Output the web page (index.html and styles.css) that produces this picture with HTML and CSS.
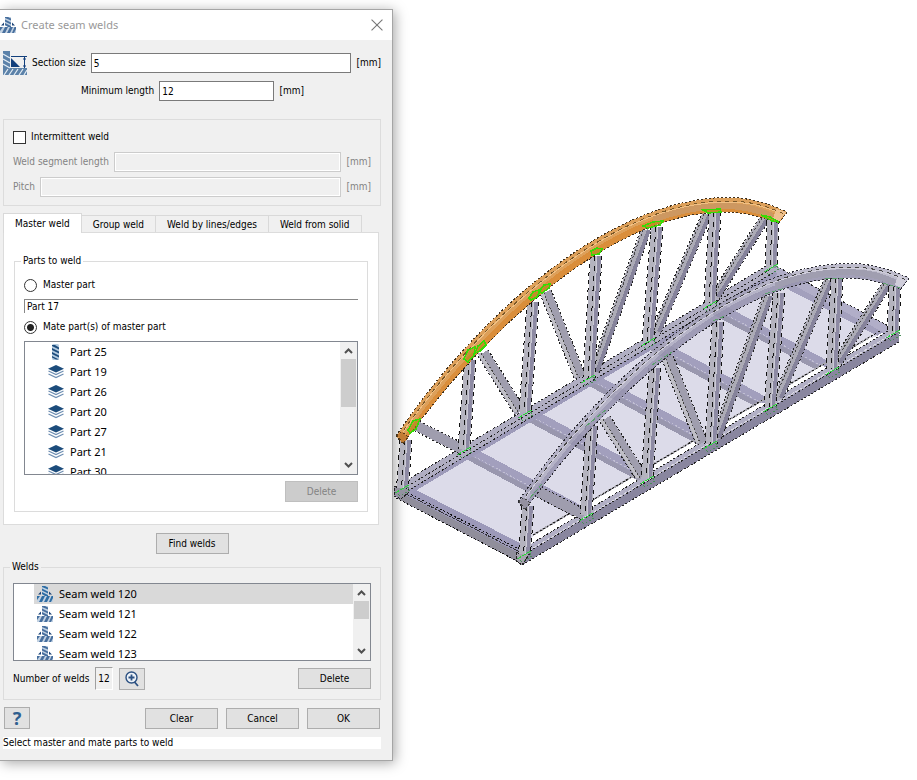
FILE: index.html
```
<!DOCTYPE html>
<html lang="en">
<head>
<meta charset="utf-8">
<title>Create seam welds</title>
<link rel="stylesheet" href="styles.css">
</head>
<body>
<svg class="defs" aria-hidden="true">
  <defs>
    <symbol id="weld" viewBox="0 0 16 16">
      <path d="M5 0h6v9H5zM1 10h14l1 1v5H0v-5z" fill="#c3d2e2"/>
      <path d="M5 0h3l3 1.500v2L5 1zM5 2.500l6 3v2L5 4.500zM5 6l6 3v1H8L5 8zM0 10h3l-3 4zM5 10h3l-3 6H2zM10 10h3l-3 6H7zM14.500 10H16v2l-2 4h-2z" fill="currentColor"/>
      <path d="M1 8.500 4 5.500v3zM15 8.500 12 5.500v3z" fill="#1b4377"/>
    </symbol>
    <symbol id="layers" viewBox="0 0 16 16">
      <path d="M.5 7 8 10.500 15.500 7M.5 10 8 13.500 15.500 10" fill="none" stroke="#6f8fb3" stroke-width="1.300"/>
      <path d="M8 1 16 4.700 8 8.500 0 4.700z" fill="#1c4c7c"/>
    </symbol>
    <symbol id="beam" viewBox="0 0 16 16">
      <path d="M4 1 5 0h5l1 1v14l-1 1H5l-1-1z" fill="#b4cbe0"/>
      <path d="M4 1h3l4 2.500v2L4 2zM4 4l7 3.500v2L4 6zM4 8l7 3.500v2L4 10zM4 12l7 3.500H8l-4-2z" fill="#1c4c7c"/>
    </symbol>
    <symbol id="up" viewBox="0 0 9 6"><path d="M1 5 4.500 1.500 8 5" fill="none" stroke="#505050" stroke-width="2"/></symbol>
    <symbol id="down" viewBox="0 0 9 6"><path d="M1 1 4.500 4.500 8 1" fill="none" stroke="#505050" stroke-width="2"/></symbol>
  </defs>
</svg>
<main class="workspace">
  <form class="dialog">
    <header class="titlebar">
      <svg class="icon title-icon"><use href="#weld"/></svg>
      <h1>Create seam welds</h1>
      <button type="button" class="close" aria-label="Close"><svg viewBox="0 0 11 11"><path d="M.5.5l10 10M10.500.5l-10 10" stroke="#777" fill="none"/></svg></button>
    </header>
    <div class="content">
      <div class="row section-row">
        <svg class="section-icon" viewBox="0 0 24 24">
          <path d="M0 0h7v17h17v7H0z" fill="#5c82a9"/>
          <path d="M0 3l7 4M0 8l7 4M0 13l7 4M1 24l4-6M6 24l4-6M11 24l4-6M16 24l4-6M21 24l3-5" stroke="#e4edf5" stroke-width="1.200"/>
          <path d="M8 7v9h9z" fill="#123f7c"/>
          <path d="M8 5.500h16M21.500 6v11M20 8h3M20 15h3" stroke="#123f7c"/>
        </svg>
        <label for="size">Section size</label>
        <input id="size" type="text" value="5">
        <span class="unit">[mm]</span>
      </div>
      <div class="row length-row">
        <label for="minlen">Minimum length</label>
        <input id="minlen" type="text" value="12">
        <span class="unit">[mm]</span>
      </div>
      <div class="group">
        <div class="row"><input id="inter" type="checkbox"><label for="inter">Intermittent weld</label></div>
        <div class="row off"><label for="seg">Weld segment length</label><input id="seg" type="text" disabled><span class="unit">[mm]</span></div>
        <div class="row off"><label for="pitch">Pitch</label><input id="pitch" type="text" disabled><span class="unit">[mm]</span></div>
      </div>
      <div class="tabs" role="tablist">
        <button type="button" role="tab" class="tab active" aria-selected="true">Master weld</button>
        <button type="button" role="tab" class="tab">Group weld</button>
        <button type="button" role="tab" class="tab">Weld by lines/edges</button>
        <button type="button" role="tab" class="tab">Weld from solid</button>
      </div>
      <section class="panel" role="tabpanel">
        <fieldset>
          <legend>Parts to weld</legend>
          <div class="stack">
            <div class="choice"><input id="master" name="target" type="radio"><label for="master">Master part</label></div>
            <output class="part-name">Part 17</output>
            <div class="choice"><input id="mate" name="target" type="radio" checked><label for="mate">Mate part(s) of master part</label></div>
            <div class="listbox parts">
              <ul>
                <li><svg class="icon"><use href="#beam"/></svg>Part 25</li>
                <li><svg class="icon"><use href="#layers"/></svg>Part 19</li>
                <li><svg class="icon"><use href="#layers"/></svg>Part 26</li>
                <li><svg class="icon"><use href="#layers"/></svg>Part 20</li>
                <li><svg class="icon"><use href="#layers"/></svg>Part 27</li>
                <li><svg class="icon"><use href="#layers"/></svg>Part 21</li>
                <li><svg class="icon"><use href="#layers"/></svg>Part 30</li>
              </ul>
              <div class="scroll"><svg><use href="#up"/></svg><div class="track"><div class="thumb"></div></div><svg><use href="#down"/></svg></div>
            </div>
            <button type="button" class="btn end" disabled>Delete</button>
          </div>
        </fieldset>
      </section>
      <button type="button" class="btn find">Find welds</button>
      <fieldset class="welds">
        <legend>Welds</legend>
        <div class="stack">
          <div class="listbox seams">
            <ul>
              <li class="selected"><svg class="icon"><use href="#weld"/></svg>Seam weld 120</li>
              <li><svg class="icon"><use href="#weld"/></svg>Seam weld 121</li>
              <li><svg class="icon"><use href="#weld"/></svg>Seam weld 122</li>
              <li><svg class="icon"><use href="#weld"/></svg>Seam weld 123</li>
            </ul>
            <div class="scroll"><svg><use href="#up"/></svg><div class="track"><div class="thumb short"></div></div><svg><use href="#down"/></svg></div>
          </div>
          <div class="row count-row">
            <label for="count">Number of welds</label>
            <output id="count" class="count">12</output>
            <button type="button" class="btn tool" aria-label="Zoom to weld"><svg viewBox="0 0 14 16"><circle cx="6.500" cy="6.500" r="5.500" fill="#eef3f8" stroke="#2c5182" stroke-width="1.400"/><path d="M6.500 3.500v6M3.500 6.500h6M9.500 11l3.500 4" stroke="#2c5182" stroke-width="1.800" fill="none"/></svg></button>
            <button type="button" class="btn end">Delete</button>
          </div>
        </div>
      </fieldset>
      <footer class="row actions">
        <button type="button" class="btn tool help" aria-label="Help">?</button>
        <button type="button" class="btn">Clear</button>
        <button type="button" class="btn">Cancel</button>
        <button type="button" class="btn">OK</button>
      </footer>
      <p class="status">Select master and mate parts to weld</p>
    </div>
  </form>

  <svg class="model" viewBox="393 0 524 780" role="img" aria-label="Arch bridge model">
    <defs>
      <path id="posts" d="M406 440 402.500 488M470 360 464 449M533 302 525 412M596 256 589 378M657 227 648 341M715 212 710 303M773 220 771 268"/>
      <path id="braces" d="M646 230 594 372M707 214 656 332M765 218 715 297"/>
      <path id="wide" d="M483 353 520 412M545.500 292 580 377"/>
      <path id="tie" d="M417 426 462 449"/>
      <g id="truss" fill="none">
        <use href="#tie" stroke="#222" stroke-width="12" stroke-dasharray="2 2"/>
        <use href="#tie" stroke="#9f9dae" stroke-width="10"/>
        <use href="#wide" stroke="#222" stroke-width="13" stroke-dasharray="2 2"/>
        <use href="#wide" stroke="#a09eae" stroke-width="11"/>
        <use href="#wide" stroke="#c0bfc6" stroke-width="3" transform="translate(-4 0)"/>
        <use href="#wide" stroke="#444" stroke-dasharray="2 2" transform="translate(-2 0)"/>
        <use href="#braces" stroke="#222" stroke-width="11" stroke-dasharray="2 2"/>
        <use href="#braces" stroke="#acabb6" stroke-width="9"/>
        <use href="#braces" stroke="#86839b" stroke-width="4" transform="translate(3 0)"/>
        <use href="#braces" stroke="#444" stroke-dasharray="2 2" transform="translate(-3 0)"/>
        <use href="#posts" stroke="#111" stroke-width="13" stroke-dasharray="4 4"/>
        <use href="#posts" stroke="#b4b3be" stroke-width="11"/>
        <use href="#posts" stroke="#8d8aa3" stroke-width="4" transform="translate(3 0)"/>
        <use href="#posts" stroke="#cbcad5" transform="translate(1 0)"/>
        <use href="#posts" stroke="#111" stroke-dasharray="5 5" transform="translate(-1 0)"/>
      </g>
      <path id="arch" d="M396 436C478 314 610 197.500 728 197.500C750 197.500 770 204 787 212L779 223C762 217 745 212 724 212C612 212 485 330 403 444Z"/>
      <path id="arch-front" d="M401 441C482 323 611 205 726 205C748 205 765 209 783 217L779 223C762 217 745 212 724 212C612 212 485 330 403 444Z"/>
      <path id="ridge" d="M399 438C480 319 611 202 727 202C749 202 768 207 784 215"/>
      <path id="chord" d="M397 486 768 265 778 270 404 493Z"/>
      <g id="joint" fill="none">
        <path d="M-7 4 7-4" stroke="#25db35" stroke-dasharray="5 1"/>
        <path d="M-7 3-2 7 8 1 4-4" stroke="#498d58" stroke-dasharray="2 2"/>
      </g>
      <g id="joints">
        <use href="#joint" x="402" y="489"/><use href="#joint" x="464" y="451"/><use href="#joint" x="525" y="414"/><use href="#joint" x="588" y="379"/><use href="#joint" x="648" y="342"/><use href="#joint" x="710" y="305"/><use href="#joint" x="771" y="268"/>
      </g>
      <path id="cross" d="M464 450 587 516M525 412 648 478M587 377 710 443M648 341 771 407M710 305 833 371"/>
    </defs>

    <path d="M404 489 775 267 896 333 870 338 533 536 522 553Z" fill="#dcdbe9"/>
    <path d="M776 266 894 329 892 341 771 277Z" fill="#b1aec8"/>
    <path d="M771 277 892 340" stroke="#a3a0bd" stroke-width="6"/>
    <path d="M776 266 894 329" stroke="#222" stroke-dasharray="2 2"/>
    <g fill="none">
      <use href="#cross" stroke="#a29fbd" stroke-width="13"/>
      <use href="#cross" stroke="#9997ae" stroke-width="5" transform="translate(-2 4)"/>
      <use href="#cross" stroke="#c1bfd2" stroke-dasharray="2 2" transform="translate(0 1)"/>
    </g>
    <path d="M410 487 524 545 518 560 396 495Z" fill="#9c99b9"/>
    <path d="M401 493 519 553 518 562 396 498Z" fill="#908e9b"/>
    <path d="M404 491 521 550M396 498 519 562" stroke="#111" stroke-dasharray="2 2"/>
    <path d="M406 494 520 552" stroke="#333" stroke-dasharray="3 1"/>

    <use href="#chord" fill="#b0aec2"/>
    <path d="M403 493 776 271 777 275 410 494Z" fill="#9d9ab9"/>
    <path d="M397 486 768 265M404 493 773 273M401 490 771 269" fill="none" stroke="#222" stroke-dasharray="2 2"/>
    <path d="M394 487 402 484 410 491 401 499 394 496Z" fill="#9492a0" stroke="#222" stroke-dasharray="3 1"/>
    <use href="#truss"/>
    <use href="#joints"/>

    <use href="#arch" fill="#dda05a"/>
    <use href="#arch-front" fill="#da8e3b"/>
    <path d="M653 216C677 207 700 203 726 203C748 203 765 208 780 217L774 219C757 213 742 209 724 209C697 209 675 215 653 223Z" fill="#cd9861"/>
    <path d="M776 209 786 212 779 222 773 219Z" fill="#efc18f"/>
    <use href="#arch" fill="none" stroke="#40301c" stroke-dasharray="2 2"/>
    <g fill="none">
      <use href="#ridge" stroke="#f0c084"/>
      <use href="#ridge" stroke="#7a5828" stroke-dasharray="4 4" transform="translate(0 -1)"/>
    </g>
    <path d="M397 435 403 444 408 437 402 432Z" fill="#c27d35" stroke="#5d3d18" stroke-dasharray="2 2"/>
    <g fill="#a88c16" fill-opacity=".5" stroke="#35db05" stroke-width="1.500">
      <path d="M408 430 413 421 420 419 416 429 410 433ZM464 359 468 350 475 347 474 355 468 362ZM475 353 478 346 484 341 486 345 480 351ZM529 298 533 292 541 289 537 297 531 300ZM539 291 544 285 550 284 549 288 542 293ZM591 251 597 248 602 249 599 254 592 255ZM643 226 653 222 663 221 660 225 648 228ZM703 210 720 209 721 212 708 213ZM761 215 770 217 779 222 772 221Z"/>
    </g>

    <path d="M533 535 870 337" stroke="#a9a8b0" stroke-width="2"/>
    <path d="M534 538 586 507 590 510 534 543ZM596 501 643 475 648 477 601 505ZM656 465 694 443 700 445 656 471ZM727 422 760 403 768 403 724 430ZM787 387 822 366 829 368 784 394ZM852 350 882 333 888 334 849 357Z" fill="#fff"/>
    <path d="M533 535 880 331" fill="none" stroke="#222" stroke-dasharray="2 2"/>
    <path d="M519 551 890 330 899 335 525 559Z" fill="#b2b0c5"/>
    <path d="M523 555 899 332 899 342 522 565Z" fill="#89869f"/>
    <path d="M519 551 890 330M523 555 899 332M522 565 899 342" fill="none" stroke="#222" stroke-dasharray="2 2"/>
    <path d="M525 553 894 333" stroke="#dcdbe3" stroke-dasharray="3 2"/>
    <path d="M516 553 524 549 530 553 522 565 516 561Z" fill="#a5a3ae" stroke="#222" stroke-dasharray="3 1"/>
    <use href="#truss" transform="translate(122 66)"/>
    <use href="#joints" transform="translate(122 66)"/>
    <g transform="translate(122 66)" fill="none">
      <use href="#arch" fill="#a8a6bb" fill-opacity=".75"/>
      <use href="#arch-front" fill="#8c89a7" fill-opacity=".55"/>
      <path d="M653 216C677 207 700 203 726 203C748 203 765 208 780 217L774 219C757 213 742 209 724 209C697 209 675 215 653 223Z" fill="#a09eb0"/>
      <path d="M776 209 786 212 779 222 773 219Z" fill="#cfcdda"/>
      <use href="#arch" stroke="#292930" stroke-dasharray="2 2"/>
      <use href="#ridge" stroke="#d0cedb"/>
      <use href="#ridge" stroke="#444" stroke-dasharray="4 4" transform="translate(0 -1)"/>
      <path d="M397 435 403 444 408 437 402 432Z" fill="#9491a0" stroke="#444" stroke-dasharray="2 2"/>
      <path d="M408 432 420 418M464 360 485 343M530 299 550 286M591 255 603 250M643 228 663 222M703 213 721 212M761 217 778 222" stroke="#5b9f6c" stroke-dasharray="5 2"/>
    </g>
  </svg>
</main>
</body>
</html>
```
FILE: styles.css
```
* { box-sizing: border-box; }
body {
  margin: 0;
  background: #fff;
  color: #000;
  font: 10px/16px "DejaVu Sans Condensed", "DejaVu Sans", sans-serif;
  overflow-x: hidden;
}
button, input, output { font: inherit; color: inherit; }
.defs { position: absolute; width: 0; height: 0; }
.workspace {
  display: grid;
  grid-template-columns: minmax(0, 3fr) minmax(0, 4fr);
  align-items: start;
}
.dialog {
  margin-top: 9px;
  background: #f0f0f0;
  border: 1px solid #a5a5a5;
  border-left: 0;
  box-shadow: 2px 2px 12px rgba(0, 0, 0, .35);
}
.titlebar {
  display: flex;
  align-items: center;
  height: 30px;
  padding-right: 9px;
  background: #fff;
}
.titlebar h1 { flex: 1; margin: 0 0 0 5px; font: 11px/16px "Noto Sans", sans-serif; color: #999; }
.close { display: flex; padding: 0; border: 0; background: none; }
.close svg { width: 12px; height: 12px; }
.icon { flex: none; width: 16px; height: 16px; color: #476f9e; }
.content { display: flex; flex-direction: column; padding: 11px 11px 11px 3px; }
.row { display: flex; align-items: center; gap: 6px; }
.row label, .unit { flex: none; white-space: nowrap; }
input[type="text"] {
  flex: 1;
  min-width: 0;
  height: 20px;
  padding: 0 2px;
  border: 1px solid #7a7a7a;
  background: #fff;
}
.section-icon { width: 24px; height: 24px; }
.section-row, .length-row { gap: 5px; }
.length-row { margin: 6px 77px 0 78px; }
.group {
  display: flex;
  flex-direction: column;
  gap: 5px;
  margin-top: 18px;
  padding: 7px 9px 8px;
  border: 1px solid #dcdcdc;
}
.group .row { height: 20px; gap: 5px; }
.off { color: #838383; }
input[type="text"]:disabled { border-color: #ccc; background: #f0f0f0; box-shadow: inset 0 0 0 1px #fff; }
input[type="checkbox"], input[type="radio"] {
  appearance: none;
  flex: none;
  width: 13px;
  height: 13px;
  margin: 0;
  border: 1px solid #333;
  background: #fff;
}
input[type="radio"] { border-radius: 50%; }
input[type="radio"]:checked { background: radial-gradient(circle, #222 0 3px, #fff 4px); }
.tabs { display: flex; align-items: flex-end; height: 20px; margin-top: 7px; }
.tab {
  height: 18px;
  padding: 0 11px;
  border: 1px solid #d9d9d9;
  border-width: 1px 1px 0 0;
  background: #f0f0f0;
  line-height: 17px;
  white-space: nowrap;
}
.tab.active { position: relative; z-index: 1; height: 20px; border-left-width: 1px; background: #fff; }
.panel { margin: -1px 2px 0 0; padding: 20px 10px 12px; border: 1px solid #dcdcdc; background: #fff; }
fieldset { min-width: 0; margin: 0; padding: 0 9px 9px; border: 1px solid #dcdcdc; }
legend { height: 16px; margin-left: -3px; padding: 0 2px; }
.stack { display: flex; flex-direction: column; gap: 6px; padding-top: 8px; }
.choice { display: flex; align-items: center; gap: 6px; height: 16px; }
.part-name { height: 14px; padding-left: 2px; border: solid #888; border-width: 1px 0 0 1px; line-height: 14px; }
.listbox { display: flex; overflow: hidden; border: 1px solid #828790; background: #fff; font: 11px/20px "Noto Sans", sans-serif; }
.parts { height: 134px; }
.seams { height: 78px; }
.listbox ul { flex: 1; margin: 0; padding: 0; list-style: none; }
.listbox li { display: flex; align-items: center; gap: 6px; height: 20px; margin-left: 20px; padding-left: 3px; white-space: nowrap; }
.selected { background: #d9d9d9; }
.selected .icon { color: #2e6da4; }
.scroll { display: flex; flex-direction: column; align-items: center; width: 17px; padding: 6px 0; background: #f0f0f0; }
.scroll svg { flex: none; width: 9px; height: 6px; }
.track { flex: 1; width: 15px; padding: 5px 0; }
.thumb { height: 48px; background: #cdcdcd; }
.thumb.short { height: 18px; }
.btn {
  width: 73px;
  height: 21px;
  padding: 0;
  border: 1px solid #adadad;
  background: #e1e1e1;
  line-height: 19px;
}
.btn:disabled { border-color: #bfbfbf; background: #ccc; color: #838383; }
.end { align-self: flex-end; }
.find { align-self: center; margin-top: 8px; }
.welds { margin-top: 5px; }
.count-row { height: 23px; }
.count { height: 23px; padding: 0 2px; border: 1px solid; border-color: #a0a0a0 #fff #fff #a0a0a0; line-height: 21px; }
.count-row .end { margin-left: auto; align-self: center; }
.tool { display: flex; align-items: center; justify-content: center; width: 26px; height: 22px; }
.tool svg { width: 14px; height: 16px; }
.actions { gap: 8px; margin: 7px 1px 0; }
.help { margin-right: auto; color: #2f5f8f; font: 700 18px/20px "Noto Sans", sans-serif; }
.status { height: 12px; margin: 8px 0 0; background: #fff; line-height: 12px; white-space: nowrap; }
.model { display: block; width: 100%; overflow: visible; shape-rendering: crispEdges; }
```
